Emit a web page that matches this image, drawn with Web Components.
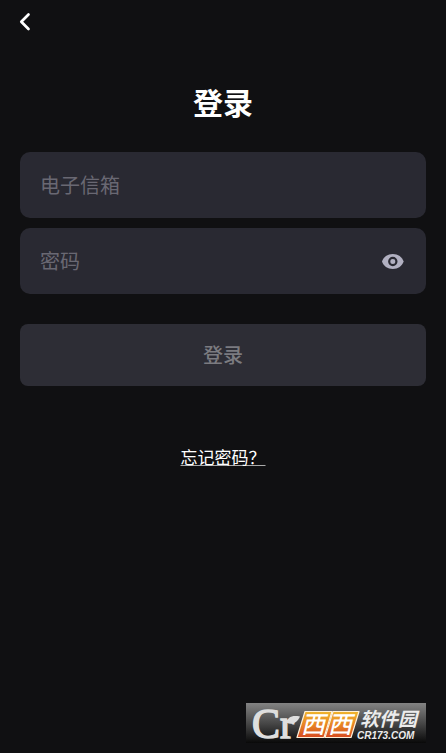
<!DOCTYPE html>
<html lang="zh-CN">
<head>
<meta charset="utf-8">
<meta name="viewport" content="width=device-width, initial-scale=1">
<title>登录</title>
<style>
body { margin: 0; background: #101012; color: #fff; font-family: Roboto, "Noto Sans CJK SC", sans-serif; }
</style>
</head>
<body>
<login-page></login-page>
<script>
const define = (name, html, setup) => {
  const template = document.createElement('template');
  template.innerHTML = html;
  customElements.define(name, class extends HTMLElement {
    constructor() {
      super();
      this.attachShadow({ mode: 'open' }).append(template.content.cloneNode(true));
    }
    connectedCallback() { if (setup) setup(this, this.shadowRoot); }
  });
};

define('back-button', `
<style>
:host { display: block; }
button { display: grid; place-items: center; width: 40px; height: 44px; margin: 0; padding: 0; border: 0; background: none; color: #fff; cursor: pointer; }
svg { display: block; }
</style>
<button type="button" aria-label="返回">
  <svg width="30" height="24" viewBox="0 0 30 24" fill="none" stroke="currentColor" stroke-width="2.700" stroke-linecap="round" stroke-linejoin="round"><path d="M23.500 4.500L16.300 11.800L23.500 19"/></svg>
</button>`);

define('text-field', `
<style>
:host { display: block; }
div { display: flex; align-items: center; height: 66px; padding: 0 20px; border-radius: 10px; background: #292932; }
input { flex: 1; min-width: 0; height: 30px; margin: 0; padding: 0; border: 0; outline: 0; background: none; color: #fff; font: 20px/30px "Noto Sans CJK SC", sans-serif; }
input::placeholder { color: #696873; opacity: 1; }
</style>
<div><input><slot></slot></div>`, (host, root) => {
  const input = root.querySelector('input');
  input.type = host.getAttribute('type') || 'text';
  input.placeholder = host.getAttribute('label');
  input.setAttribute('aria-label', host.getAttribute('label'));
});

define('reveal-button', `
<style>
:host { display: block; }
button { display: block; margin: 0; padding: 0; border: 0; background: none; color: #b1b0c1; cursor: pointer; }
svg { display: block; }
</style>
<button type="button" aria-label="显示密码">
  <svg width="26" height="26" viewBox="0 0 26 26"><path fill="currentColor" d="M12.800 6C7.600 6 3.300 9 2 13.500C3.300 18 7.600 21 12.800 21S22.300 18 23.600 13.500C22.300 9 18 6 12.800 6Z"/><circle cx="12.800" cy="13.500" r="3.600" fill="none" stroke="#292932" stroke-width="2.200"/></svg>
</button>`);

define('submit-button', `
<style>
:host { display: block; }
button { display: block; width: 100%; height: 62px; margin: 0; padding: 0; border: 0; border-radius: 8px; background: #2d2d35; color: #7b7b80; font: 500 20px/30px "Noto Sans CJK SC", sans-serif; }
</style>
<button type="submit"><slot></slot></button>`);

define('site-mark', `
<style>
:host { display: block; }
svg { display: block; overflow: visible; }
text { font-family: "Noto Sans CJK SC", sans-serif; }
.serif { font-family: "Liberation Serif", serif; font-weight: 400; }
.slant { font-style: italic; font-weight: 700; }
.tile { font-weight: 500; }
.latin { font-family: "Liberation Sans", sans-serif; }
</style>
<svg width="180" height="40" viewBox="0 0 180 40" role="img" aria-label="西西软件园">
  <defs>
    <linearGradient id="bar" x1="0" y1="0" x2="0" y2="1"><stop offset="0" stop-color="#838383"/><stop offset=".5" stop-color="#484848"/><stop offset="1" stop-color="#090909"/></linearGradient>
    <linearGradient id="tile" x1="0" y1="0" x2="0" y2="1"><stop offset="0" stop-color="#efb52d"/><stop offset=".5" stop-color="#e88625"/><stop offset="1" stop-color="#d64b20"/></linearGradient>
  </defs>
  <rect width="180" height="40" fill="url(#bar)"/>
  <g fill="#dedede" stroke="#dedede">
    <text class="serif" x="6" y="35" font-size="42" stroke-width="1.500">Cr</text>
    <path stroke="none" d="M41 20C41 14 46 12 54 13.500C51 20 46 22 41 20Z"/>
  </g>
  <g fill="url(#tile)" stroke="#fff0d8" stroke-width="1.200" stroke-linejoin="round">
    <path d="M59 8.500H86L78 34.500H51Z"/>
    <path d="M87 8.500H113L105 34.500H79Z"/>
  </g>
  <g fill="#fff">
    <text class="slant tile" x="55" y="30" font-size="24">西</text>
    <text class="slant tile" x="82" y="30" font-size="24">西</text>
  </g>
  <g fill="#ececec">
    <text class="slant" x="114" y="23" font-size="19">软件园</text>
    <text class="slant latin" x="111" y="36" font-size="10">CR173.COM</text>
  </g>
</svg>`);

define('login-page', `
<style>
:host { display: flex; flex-direction: column; min-height: 100vh; box-sizing: border-box; padding-bottom: 10px; }
h1 { margin: 34px 0 28px; text-align: center; font: 700 30px/46px "Noto Sans CJK SC", sans-serif; color: #fff; }
form { display: grid; gap: 10px; margin: 0 20px; }
submit-button { margin-top: 20px; }
nav { margin-top: 58px; text-align: center; }
a { color: #fff; font: 17px/26px "Noto Sans CJK SC", sans-serif; text-decoration: underline; text-decoration-thickness: 1px; text-underline-offset: 1px; text-decoration-skip-ink: none; text-decoration-color: #aaa; }
footer { display: flex; justify-content: flex-end; margin-top: auto; padding: 20px 20px 0; }
</style>
<header><back-button></back-button></header>
<h1>登录</h1>
<form>
  <text-field type="email" label="电子信箱"></text-field>
  <text-field type="password" label="密码"><reveal-button></reveal-button></text-field>
  <submit-button>登录</submit-button>
</form>
<nav><a href="#forgot">忘记密码？</a></nav>
<footer><site-mark></site-mark></footer>`);
</script>
</body>
</html>
